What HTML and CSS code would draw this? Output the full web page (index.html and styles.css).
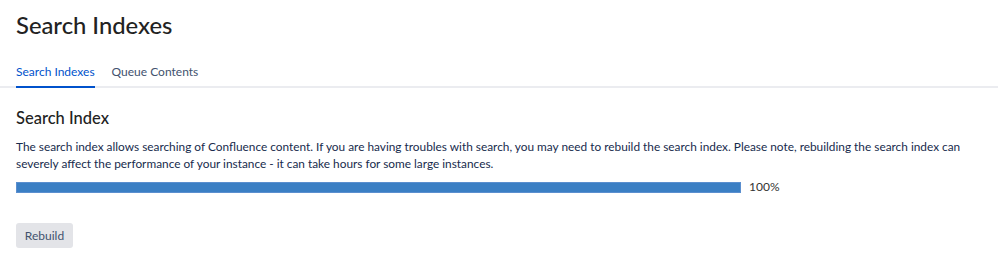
FILE: index.html
```html
<!DOCTYPE html>
<html lang="en">
<head>
<meta charset="utf-8">
<title>Search Indexes</title>
<link rel="stylesheet" href="styles.css">
</head>
<body>
<header class="page-header">
  <h1 class="page-title">Search Indexes</h1>
</header>
<nav class="tabs">
  <a class="tab tab-active" href="#">Search Indexes</a>
  <a class="tab" href="#">Queue Contents</a>
</nav>
<main class="content">
  <h2 class="section-title">Search Index</h2>
  <p class="desc">The search index allows searching of Confluence content. If you are having troubles with search, you may need to rebuild the search index. Please note, rebuilding the search index can severely affect the performance of your instance - it can take hours for some large instances.</p>
  <div class="progress-row">
    <div class="progress"><div class="progress-fill" style="width:100%"></div></div>
    <span class="progress-label">100%</span>
  </div>
  <button class="btn" type="button">Rebuild</button>
</main>
</body>
</html>
```

FILE: styles.css
```css
html, body {
  margin: 0;
  padding: 0;
  background: #ffffff;
}
body {
  font-family: Lato, "Noto Sans", "Liberation Sans", sans-serif;
  color: #172b4d;
  font-size: 12px;
}
.page-header {
  padding: 11px 16px 0;
}
.page-title {
  margin: 0;
  font-size: 23.8px;
  line-height: 28px;
  font-weight: 500;
  color: #222;
}
.tabs {
  display: flex;
  gap: 17px;
  margin-top: 23px;
  padding: 0 16px;
  border-bottom: 2px solid #ebecf0;
}
.tab {
  display: block;
  padding: 2px 0 6px;
  margin-bottom: -2px;
  font-size: 12px;
  line-height: 16px;
  text-decoration: none;
  color: #42526e;
  border-bottom: 2px solid transparent;
}
.tab-active {
  color: #0052cc;
  border-bottom-color: #0052cc;
}
.content {
  padding: 20px 16px 0;
}
.section-title {
  margin: 0;
  font-size: 16.5px;
  line-height: 20px;
  font-weight: 500;
  color: #222;
}
.desc {
  margin: 10px 0 0;
  font-size: 11.85px;
  line-height: 17px;
  color: #172b4d;
}
.progress-row {
  display: flex;
  align-items: center;
  gap: 8px;
  margin-top: 8px;
}
.progress {
  width: 725px;
  height: 11px;
  background: #ebecf0;
  box-sizing: border-box;
}
.progress-fill {
  height: 100%;
  background: #3b7fc4;
  box-shadow: inset 0 0 0 1px #5b8fcf;
}
.progress-label {
  font-size: 12px;
  line-height: 14px;
  color: #333;
}
.btn {
  display: block;
  margin-top: 29px;
  width: 57px;
  height: 25px;
  padding: 0;
  border: 0;
  border-radius: 3px;
  background: #e3e4e8;
  color: #42526e;
  font-family: inherit;
  font-size: 12px;
}
```
